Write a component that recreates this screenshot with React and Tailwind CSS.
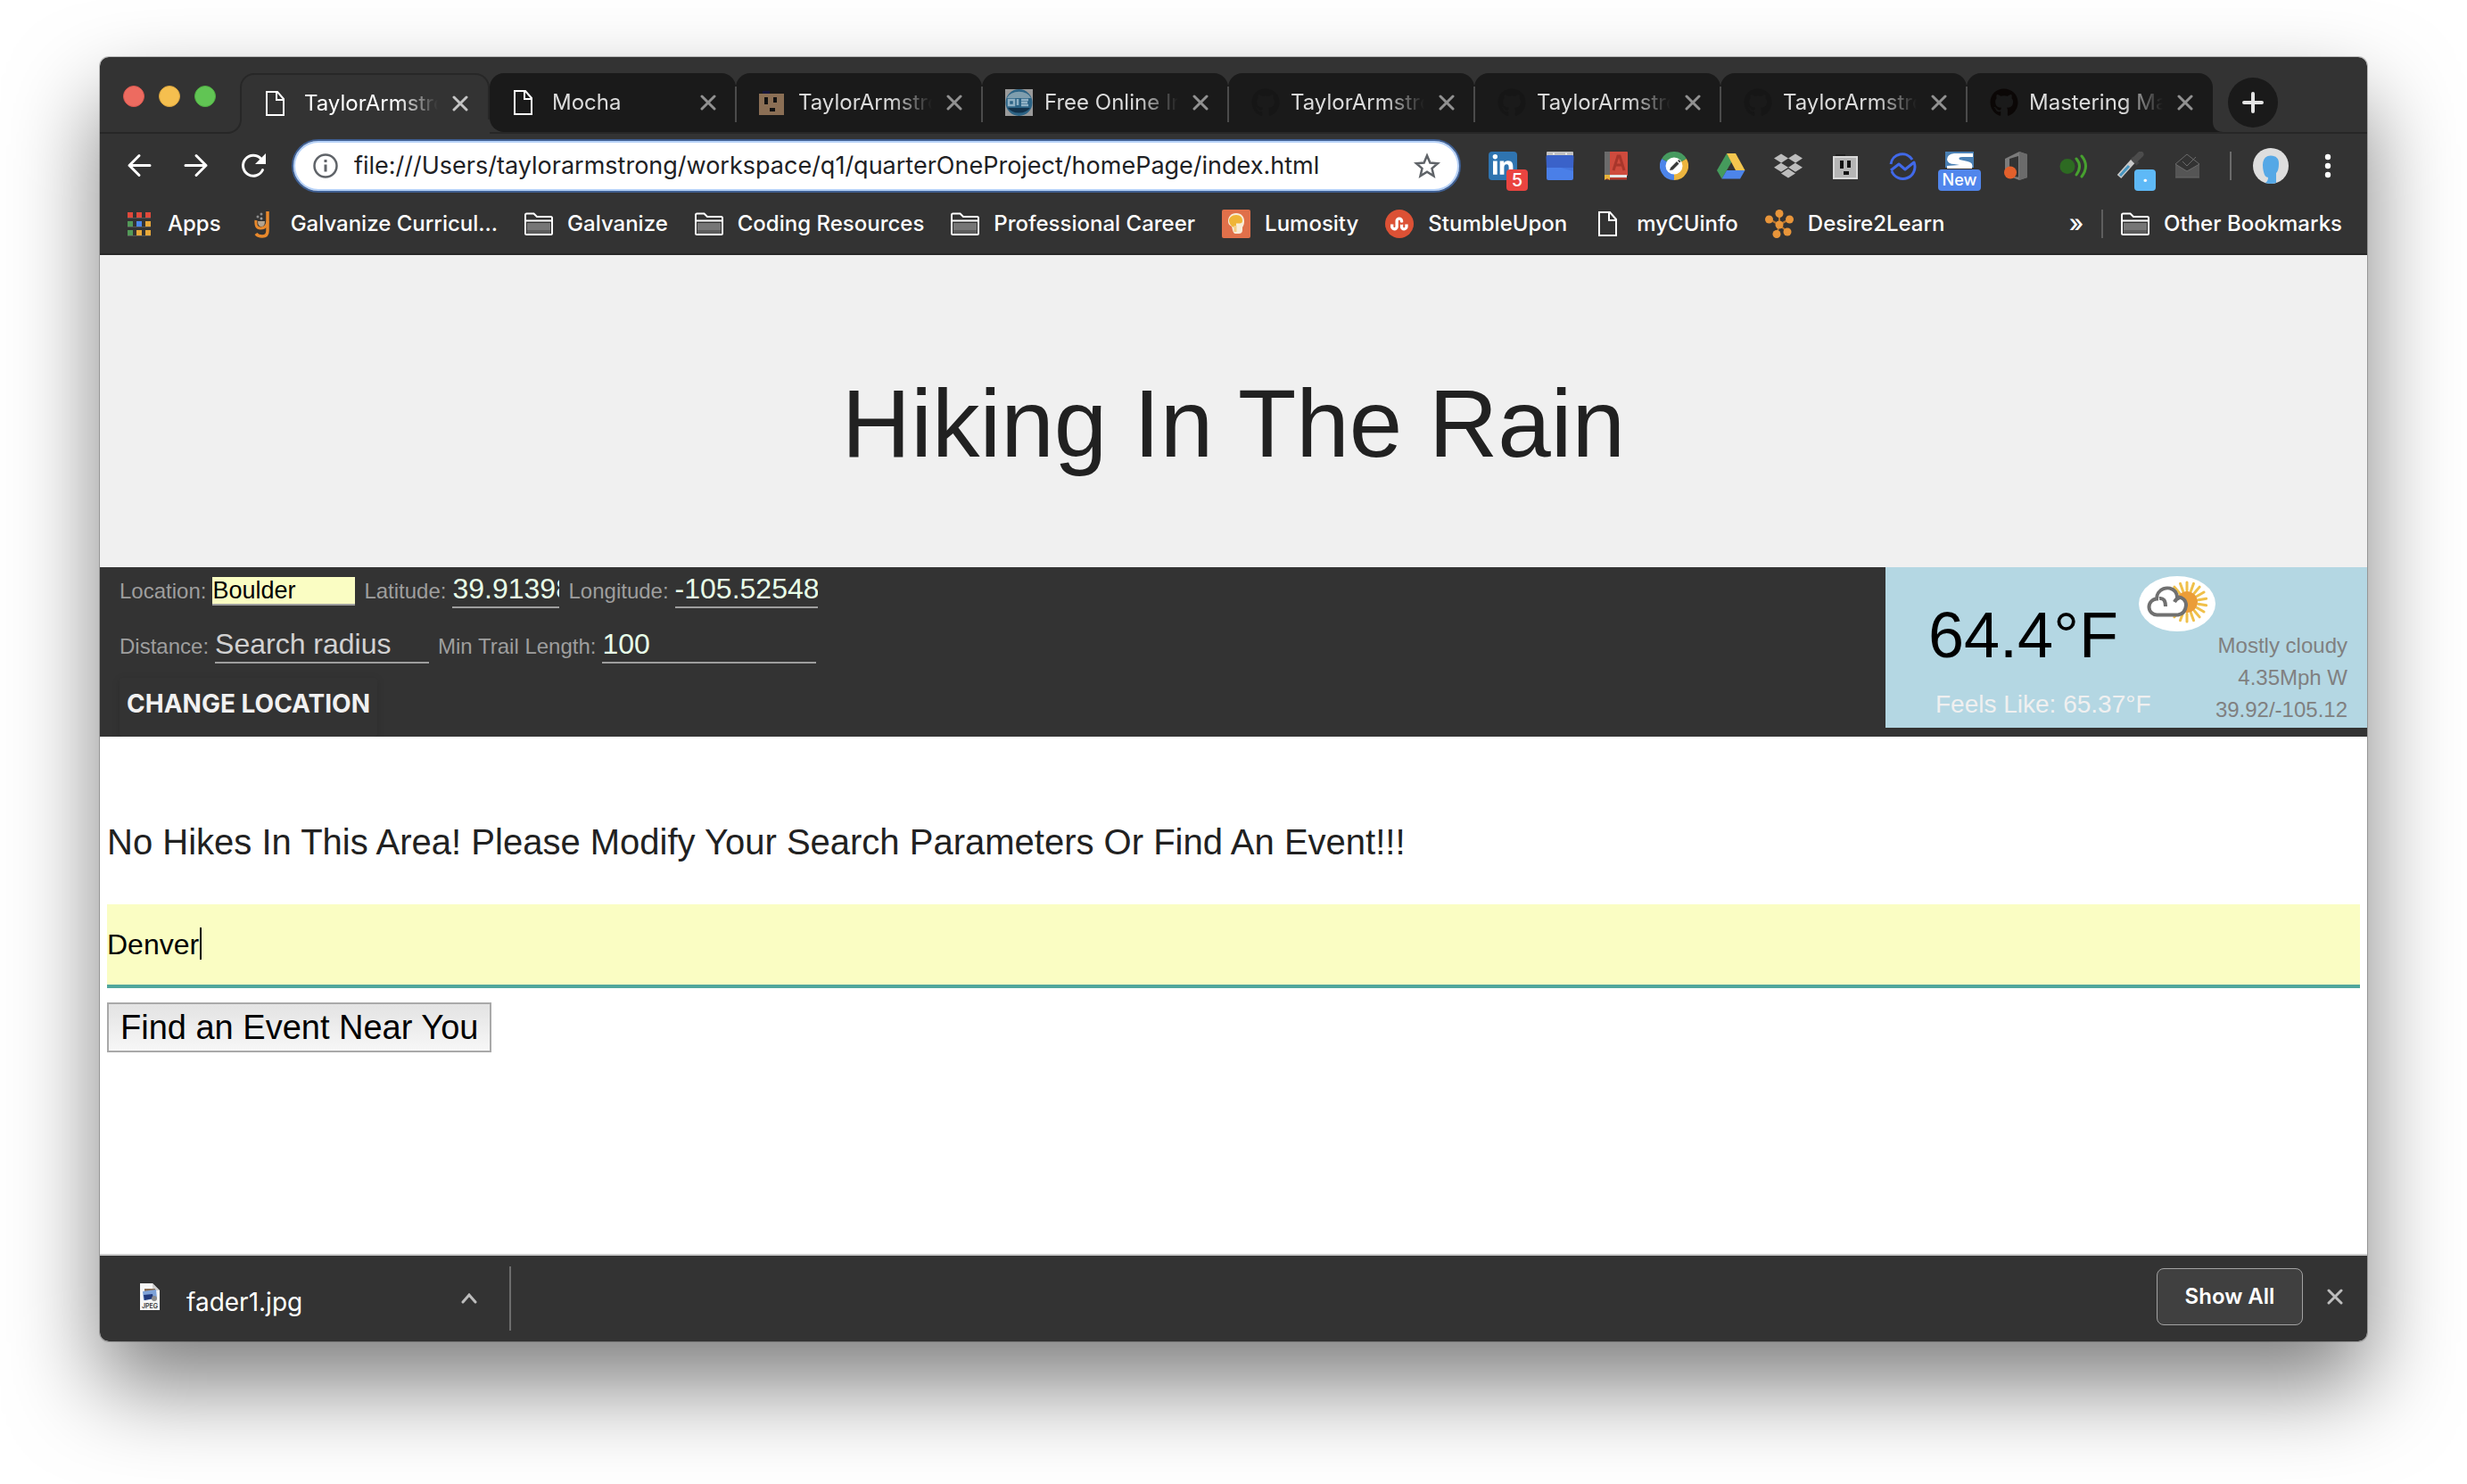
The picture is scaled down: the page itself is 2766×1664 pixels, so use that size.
import { FaDropbox, FaGithub, FaLinkedinIn, FaStumbleupon } from "react-icons/fa";

function PageIcon({ viewBox = "0 0 32 32" }) {
  return (
    <svg viewBox={viewBox} className="size-8" fill="none" stroke="#fff" strokeWidth="2">
      <path d="M6 3h12l7 8v18H6z" />
      <path d="M17 3v9h8" />
    </svg>
  );
}

function FolderIcon() {
  return (
    <svg viewBox="0 0 32 32" className="size-8 shrink-0" fill="none" stroke="#fff" strokeWidth="2">
      <path d="M1 27.5V6q0-1.500 1.500-1.500H10.500L14 8H29.500Q31 8 31 9.500V26.500Q31 28 29.500 28H2.500Q1 28 1 27z" />
      <path d="M2 12.500h28" />
      <path d="M3 15h26v8H3z" fill="#767676" stroke="none" />
      <path d="M3 23h26v4H3z" fill="#5c5c5c" stroke="none" />
    </svg>
  );
}

function CloseIcon({ className }) {
  return (
    <svg viewBox="0 0 18 18" className={className} fill="none" stroke="currentColor" strokeWidth="3" strokeLinecap="round">
      <path d="M2 2l14 14M16 2L2 16" />
    </svg>
  );
}

function BrickIcon() {
  return (
    <svg viewBox="0 0 32 32" className="size-8">
      <path d="M4 3h8v3H4z" fill="#16163a" />
      <path d="M0 6h28v24H0z" fill="#8b6f55" />
      <path d="M6 10h4v8H6zM16 10h4v6h-4zM12 22h6v4h-6z" fill="#111" />
    </svg>
  );
}

function OieIcon() {
  return (
    <svg viewBox="0 0 32 32" className="size-8">
      <path d="M0 1h31v30H0z" fill="#9a9a9a" />
      <ellipse cx="15.500" cy="16" rx="15" ry="15" fill="#2c6385" />
      <path d="M2 11a14 10 0 0 1 27 0z" fill="#7f9eae" />
      <path d="M3 22a14 10 0 0 0 25 0z" fill="#12314a" />
      <path d="M4 13h6v6H4zM14 12v7M18 13h8M18 16h7M18 19h8" fill="none" stroke="#8fb0c4" strokeWidth="2.500" />
    </svg>
  );
}

const TABS = [
  { title: "Mocha", icon: <PageIcon viewBox="4 0 32 32" /> },
  { title: "TaylorArmstrong", icon: <BrickIcon /> },
  { title: "Free Online Image", icon: <OieIcon /> },
  { title: "TaylorArmstrong", icon: <FaGithub className="size-8 text-[#161616]" /> },
  { title: "TaylorArmstrong", icon: <FaGithub className="size-8 text-[#161616]" /> },
  { title: "TaylorArmstrong", icon: <FaGithub className="size-8 text-[#161616]" /> },
  { title: "Mastering Markdown", icon: <FaGithub className="size-8 text-[#0b0706]" /> },
];

function TabBody({ title, icon, active }) {
  return (
    <>
      <span className="size-8 shrink-0">{icon}</span>
      <span
        className={
          "w-[150px] overflow-hidden text-2xl whitespace-nowrap mask-r-from-70% mask-r-to-100% " +
          (active ? "text-white" : "text-[#dcdcdc]")
        }
      >
        {title}
      </span>
      <button aria-label={"Close " + title} className={"ml-auto " + (active ? "text-[#c4c4c4]" : "text-[#919191]")}>
        <CloseIcon className="size-[18px]" />
      </button>
    </>
  );
}

function TabStrip() {
  return (
    <div className="flex h-[86px] items-end">
      <div className="flex h-full w-[157px] shrink-0 items-center gap-4 border-b-2 border-[#272727] pt-1 pl-[26px]">
        <button aria-label="Close window" className="size-6 rounded-full border border-[#d9574f] bg-[#ed6b60]" />
        <button aria-label="Minimize window" className="size-6 rounded-full border border-[#d9a33d] bg-[#f5bf4f]" />
        <button aria-label="Zoom window" className="size-6 rounded-full border border-[#4fae42] bg-[#61c554]" />
      </div>
      <div className="relative flex h-[68px] w-[280px] items-center gap-3 pr-6 pl-7">
        <span className="absolute inset-x-0 top-0 bottom-4 rounded-t-2xl border-2 border-b-0 border-[#272727]" />
        <span className="absolute bottom-0 -left-4 h-4 w-[18px] bg-[#333]">
          <span className="block size-full rounded-br-2xl border-r-2 border-b-2 border-[#272727]" />
        </span>
        <TabBody title="TaylorArmstrong" icon={<PageIcon viewBox="4 0 32 32" />} active />
      </div>
      <div className="flex border-b-2 border-[#272727]">
        {TABS.map((tab, i) => (
          <div
            key={i}
            className={
              "relative flex h-[66px] w-[276px] items-center gap-3 rounded-t-2xl bg-[#1a1a1a] pr-[22px] pl-[26px] " +
              (i === 0 ? "rounded-bl-2xl" : "")
            }
          >
            <TabBody title={tab.title} icon={tab.icon} />
            {i < TABS.length - 1 && <span className="absolute top-[15px] -right-px z-10 h-10 w-[2px] bg-[#4b4b4b]" />}
          </div>
        ))}
      </div>
      <div className="flex h-[68px] flex-1 items-center border-b-2 border-[#272727]">
        <svg viewBox="0 0 12 12" className="size-3 self-end" fill="#1a1a1a">
          <path d="M0 0Q0 12 12 12H0z" />
        </svg>
        <button aria-label="New tab" className="ml-[5px] flex size-14 items-center justify-center rounded-full bg-[#1a1a1a]">
          <svg viewBox="0 0 24 24" className="size-6" fill="none" stroke="#e4e4e4" strokeWidth="4" strokeLinecap="round">
            <path d="M12 2v20M2 12h20" />
          </svg>
        </button>
      </div>
    </div>
  );
}

const EXTENSIONS = [
  {
    name: "LinkedIn",
    icon: (
      <span className="flex size-8 items-center justify-center rounded-sm bg-[#2f74b0]">
        <FaLinkedinIn className="size-[26px] text-white" />
      </span>
    ),
    badge: <span className="absolute top-5 left-5 flex size-6 items-center justify-center rounded bg-[#ea4440] text-xl font-medium text-white">5</span>,
  },
  {
    name: "Calendar",
    icon: (
      <svg viewBox="0 0 32 32" className="size-8">
        <path d="M1 1q0-1 1-1h28q1 0 1 1v5H1z" fill="#c2c2c2" />
        <circle cx="9" cy="2.500" r="1" fill="#fff" />
        <circle cx="23" cy="2.500" r="1" fill="#fff" />
        <path d="M2 4h28q1.500 0 1.500 2L31 18H1L.500 6Q.500 4 2 4z" fill="#3a62c9" />
        <path d="M1 18h30v12q0 2-2 2H3q-2 0-2-2z" fill="#4a7fe8" />
        <path d="M1 28l16-10h14v4L17 18z" fill="#4475dd" />
      </svg>
    ),
  },
  {
    name: "Dictionary",
    icon: (
      <svg viewBox="0 0 32 32" className="size-8">
        <path d="M2 0h7v28H2z" fill="#6b6b6b" />
        <path d="M8 0h19q1 0 1 1v26H8z" fill="#cf4b3d" />
        <path d="M12 21L17 5h2l5 16M14 15h8" fill="none" stroke="#a8362b" strokeWidth="3" />
        <path d="M7 26h20v3H7z" fill="#e6e6e6" />
        <path d="M4 29h23v2.500H4z" fill="#b23c30" />
        <path d="M2 26h6v6l-3-2-3 2z" fill="#e8b33a" />
      </svg>
    ),
  },
  {
    name: "Editor",
    icon: (
      <svg viewBox="0 0 32 32" className="size-8">
        <path d="M16 16L2.140 8A16 16 0 0 1 29.860 8z" fill="#469a5f" />
        <path d="M16 16L29.860 8A16 16 0 0 1 16 32z" fill="#ecb53f" />
        <path d="M16 16V32A16 16 0 0 1 2.140 8z" fill="#4d85ea" />
        <circle cx="16" cy="16" r="9.500" fill="#fff" />
        <path d="M11 21l1-3 7-7 2.500 2.500-7 7zM20 10l1.500-1 2 2-1.500 1.500z" fill="#3a3a3a" />
      </svg>
    ),
  },
  {
    name: "Drive",
    icon: (
      <svg viewBox="0 0 32 32" className="size-8">
        <path d="M11 2L0 21l5.500 9.500L16.500 11.500z" fill="#459b5c" />
        <path d="M11 2h10l10.500 19H21z" fill="#f4c64f" />
        <path d="M11 21h20.500L26 30.500H5.500z" fill="#4d85ea" />
      </svg>
    ),
  },
  { name: "Dropbox", icon: <FaDropbox className="size-8 text-[#bcbcbc]" /> },
  {
    name: "Outlet",
    icon: (
      <svg viewBox="0 0 32 32" className="size-8">
        <path d="M5 3h11v3H5z" fill="#1f1f1f" />
        <path d="M2 5h28v26H2z" fill="#d9d9d9" />
        <path d="M4 7h24v22H4z" fill="#b5b5b5" />
        <path d="M10 10h4v9h-4zM18 10h4v8h-4zM14 22h6v4h-6z" fill="#111" />
      </svg>
    ),
  },
  {
    name: "Messenger",
    icon: (
      <svg viewBox="0 0 32 32" className="size-8" fill="none" stroke="#4169e8" strokeWidth="3">
        <path d="M3 14A13 13 0 0 1 27 9" />
        <path d="M3 21l9-7 7 6 10-8A13 13 0 0 1 4 22" strokeLinejoin="round" />
      </svg>
    ),
  },
  {
    name: "Scribe",
    icon: (
      <svg viewBox="0 0 32 32" className="size-8">
        <path d="M0 0h32v18H0z" fill="#4a80b4" />
        <path d="M31 2H10Q2 3 2 9q1 5 8 5l6 1-14 1v3h28q2-7-5-8l-9-2q-2-3 3-3h12z" fill="#fff" />
      </svg>
    ),
    badge: <span className="absolute top-5 -left-2 flex h-6 w-12 items-center justify-center rounded bg-[#5186ec] text-lg font-medium text-white">New</span>,
  },
  {
    name: "Office",
    icon: (
      <svg viewBox="0 0 32 32" className="size-8">
        <path d="M3 8L19 0l9 3v26l-9 3-10-4 9 .500V5L8 8v11l-5 2z" fill="#7c7c7c" />
        <path d="M19 0l9 3v26l-9 3z" fill="#6b6b6b" />
        <circle cx="9" cy="23.500" r="7" fill="#e2602c" />
      </svg>
    ),
  },
  {
    name: "Beacon",
    icon: (
      <svg viewBox="0 0 32 32" className="size-8">
        <circle cx="9" cy="16.500" r="8.500" fill="#2d6a22" />
        <path d="M19 8q7 8 0 18M25 5q9 11 0 23" fill="none" stroke="#47a02f" strokeWidth="3" strokeLinecap="round" />
      </svg>
    ),
  },
  {
    name: "Color picker",
    icon: (
      <svg viewBox="0 0 32 32" className="size-8">
        <path d="M3 28L20 9" stroke="#c9c9c9" strokeWidth="6" />
        <path d="M4 27L14 16" stroke="#4796c0" strokeWidth="3" />
        <path d="M17 7l7 7" stroke="#444" strokeWidth="4" />
        <path d="M21 9l6-6" stroke="#4c4c4c" strokeWidth="7" strokeLinecap="round" />
      </svg>
    ),
    badge: <span className="absolute top-5 left-5 flex size-6 items-center justify-center rounded bg-[#5eb9f7] text-xl font-bold text-white">·</span>,
  },
  {
    name: "Inbox",
    icon: (
      <svg viewBox="0 0 32 32" className="size-8">
        <path d="M2 14l13 8 14-8v14q0 1-1 1H3q-1 0-1-1z" fill="#555" />
        <path d="M2 14L15 3l14 11-14 8zM10 11l5 5 10-10M2 29h27" fill="none" stroke="#6a6a6a" strokeWidth="1" />
      </svg>
    ),
  },
];

function Toolbar() {
  return (
    <div className="flex h-[72px] items-center pl-7">
      <div className="flex shrink-0 gap-8 pr-[27px]">
        <button aria-label="Back">
          <svg viewBox="0 0 32 32" className="size-8" fill="none" stroke="#fff" strokeWidth="3" strokeLinecap="round" strokeLinejoin="round">
            <path d="M28 15.500H5M16 4.500l-11 11 11 11" />
          </svg>
        </button>
        <button aria-label="Forward">
          <svg viewBox="0 0 32 32" className="size-8" fill="none" stroke="#fff" strokeWidth="3" strokeLinecap="round" strokeLinejoin="round">
            <path d="M4 15.500h23M16 4.500l11 11-11 11" />
          </svg>
        </button>
        <button aria-label="Reload">
          <svg viewBox="0 0 32 32" className="size-8">
            <path d="M26.500 20.500A11.500 11.500 0 1 1 24.500 8" fill="none" stroke="#fff" strokeWidth="3" strokeLinecap="round" />
            <path d="M30 2v12H18z" fill="#fff" />
          </svg>
        </button>
      </div>
      <div className="flex h-[60px] flex-1 items-center rounded-full border-2 border-[#3f5f92] bg-white px-5 ring-2 ring-[#b5d1f8] ring-inset">
        <svg viewBox="0 0 32 32" className="size-8 shrink-0" fill="none" stroke="#5f6368" strokeWidth="2.500">
          <circle cx="16" cy="16" r="12.500" />
          <path d="M16 14.500v8" strokeWidth="3" />
          <path d="M16 9v3" strokeWidth="3" />
        </svg>
        <input
          aria-label="Address"
          defaultValue="file:///Users/taylorarmstrong/workspace/q1/quarterOneProject/homePage/index.html"
          className="ml-4 min-w-0 flex-1 bg-transparent text-[27px] text-[#202124] outline-none"
        />
        <button aria-label="Bookmark this page">
          <svg viewBox="0 0 32 32" className="size-8" fill="none" stroke="#5f6368" strokeWidth="2.500">
            <path d="M16 4.500l3.400 8 8.600.700-6.500 5.700 2 8.400L16 22.800l-7.500 4.500 2-8.400L4 13.200l8.600-.700z" />
          </svg>
        </button>
      </div>
      <div className="flex shrink-0 items-center gap-8 px-[31px]">
        {EXTENSIONS.map((ext) => (
          <button key={ext.name} aria-label={ext.name} className="relative size-8">
            {ext.icon}
            {ext.badge}
          </button>
        ))}
      </div>
      <span className="h-8 w-[2px] bg-[#6b6b6b]" />
      <button aria-label="Profile" className="ml-6">
        <svg viewBox="0 0 40 40" className="size-10">
          <circle cx="20" cy="20" r="20" fill="#dedede" />
          <path d="M20 8.500c6 0 9 3.500 9 8.500 0 6-1 9-3 11v11q-6 2-12 0 3-2 3-6-3-.500-4-3c-1-3-2-6-2-11 0-6 3-10.500 9-10.500z" fill="#55a8e6" />
        </svg>
      </button>
      <button aria-label="Menu" className="mr-7 ml-7">
        <svg viewBox="0 0 32 32" className="size-8" fill="#fff">
          <circle cx="16" cy="6" r="3.200" />
          <circle cx="16" cy="16" r="3.200" />
          <circle cx="16" cy="26" r="3.200" />
        </svg>
      </button>
    </div>
  );
}

function AppsIcon() {
  return (
    <svg viewBox="0 0 32 32" className="size-8">
      <path d="M3 9h26v1H3zM3 19h26v1H3zM3 29h26v1H3z" fill="#555" />
      <path d="M3 3h6v6H3zM13 3h6v6h-6zM23 3h6v6h-6z" fill="#e0493b" />
      <path d="M3 13h6v6H3zM3 23h6v6H3z" fill="#539a58" />
      <path d="M13 13h6v6h-6z" fill="#4a86ee" />
      <path d="M23 13h6v6h-6zM13 23h6v6h-6zM23 23h6v6h-6z" fill="#e8a83a" />
    </svg>
  );
}

const BOOKMARKS = [
  { label: "Apps", icon: <AppsIcon /> },
  {
    label: "Galvanize Curricul...",
    icon: (
      <svg viewBox="0 0 32 32" className="size-8" fill="none">
        <path d="M22 2v22q0 6-6 6-5 0-7-3" stroke="#e8892c" strokeWidth="3.500" />
        <path d="M9 12q-1 9 5 9 7 0 8-8" stroke="#e8892c" strokeWidth="3" />
        <path d="M11 13h8q0 6-4 6t-4-6z" fill="#b5a48e" />
        <circle cx="11" cy="8" r="1.500" fill="#8d8d8d" />
        <circle cx="15" cy="5" r="1.500" fill="#8d8d8d" />
        <circle cx="15" cy="10" r="1.500" fill="#9d9d9d" />
      </svg>
    ),
  },
  { label: "Galvanize", icon: <FolderIcon /> },
  { label: "Coding Resources", icon: <FolderIcon /> },
  { label: "Professional Career", icon: <FolderIcon /> },
  {
    label: "Lumosity",
    icon: (
      <svg viewBox="0 0 32 32" className="size-8">
        <rect width="32" height="32" rx="2" fill="#e0704a" />
        <path d="M16 4c6 0 9 4 9 9 0 4-1 5-2 7v3q0 4-4 4h-4q-2 0-3-4l-1-4c-3-2-4-3-4-6 0-5 3-9 9-9z" fill="#f8ecd8" />
        <path d="M16 6c5 0 7 3 7 6.500q0 3-3 3h-4v4h-4c-2-2-4-4-4-7C8 9 11 6 16 6z" fill="#efb537" />
        <path d="M15 18v7" stroke="#f3cf85" strokeWidth="3" />
      </svg>
    ),
  },
  {
    label: "StumbleUpon",
    icon: (
      <span className="flex size-8 items-center justify-center rounded-full bg-[#dc5135]">
        <FaStumbleupon className="size-5 text-white" />
      </span>
    ),
  },
  { label: "myCUinfo", icon: <PageIcon /> },
  {
    label: "Desire2Learn",
    icon: (
      <svg viewBox="0 0 32 32" className="size-8" fill="#e8953a" stroke="#b9762f" strokeWidth="2">
        <path d="M16 17V5M16 17L5 11M16 17l11-6M16 17l-3 11M16 17l9 8" fill="none" />
        <g stroke="none">
          <circle cx="16" cy="4.500" r="4.500" />
          <circle cx="4.500" cy="11" r="4.500" />
          <circle cx="27.500" cy="11" r="4.500" />
          <circle cx="16" cy="17" r="4.500" />
          <circle cx="13" cy="27.500" r="4.500" />
          <circle cx="25" cy="25" r="4.500" />
        </g>
      </svg>
    ),
  },
];

function BookmarkBar() {
  return (
    <nav className="flex h-16 items-center border-b-2 border-[#272727] pr-7 pb-1 pl-7 text-2xl font-medium whitespace-nowrap text-white">
      <div className="flex items-center gap-[30px]">
        {BOOKMARKS.map((b) => (
          <a key={b.label} href="#" className="flex items-center gap-4">
            <span className="size-8 shrink-0">{b.icon}</span>
            {b.label}
          </a>
        ))}
      </div>
      <button aria-label="More bookmarks" className="ml-auto text-[27px] leading-8">
        »
      </button>
      <span className="mr-5 ml-5 h-8 w-[2px] bg-[#5e5e5e]" />
      <a href="#" className="flex items-center gap-4">
        <FolderIcon />
        Other Bookmarks
      </a>
    </nav>
  );
}

function Field({ id, label, children }) {
  return (
    <div className="flex items-baseline gap-[7px]">
      <label htmlFor={id} className="text-2xl leading-9 text-[#9e9e9e]">
        {label}
      </label>
      {children}
    </div>
  );
}

const FIELD = "h-[42px] border-b-2 border-[#9e9e9e] bg-transparent text-[32px] text-[#e8ffe8] outline-none placeholder:text-[#d1d1d1]";

const RAYS = Array.from({ length: 18 }, (_, i) => i * 20);

function SearchBand() {
  return (
    <section className="flex items-start justify-between overflow-hidden bg-[#333] font-['Liberation_Sans',sans-serif]">
      <form className="flex flex-col items-start gap-5 pt-1 pl-[22px]" onSubmit={(e) => e.preventDefault()}>
        <div className="flex h-[42px] items-baseline gap-[10px]">
          <Field id="location" label="Location:">
            <input
              id="location"
              defaultValue="Boulder"
              className="h-8 w-40 border-b-2 border-[#9e9e9e] bg-[#fafdc3] text-[27px] leading-8 text-black outline-none"
            />
          </Field>
          <Field id="latitude" label="Latitude:">
            <input id="latitude" defaultValue="39.91398" className={FIELD + " w-[120px]"} />
          </Field>
          <Field id="longitude" label="Longitude:">
            <input id="longitude" defaultValue="-105.52548" className={FIELD + " w-40"} />
          </Field>
        </div>
        <div className="flex h-[42px] items-baseline gap-[10px]">
          <Field id="distance" label="Distance:">
            <input id="distance" placeholder="Search radius" className={FIELD + " w-60"} />
          </Field>
          <Field id="length" label="Min Trail Length:">
            <input id="length" defaultValue="100" className={FIELD + " w-60"} />
          </Field>
        </div>
        <button className="-mt-1 h-[66px] rounded px-2 pb-2 font-['Inter',sans-serif] text-[28px] font-bold text-[#f1f1f1] shadow-[0_2px_8px_rgba(0,0,0,0.15)]">
          CHANGE LOCATION
        </button>
      </form>
      <div className="flex h-[180px] w-[540px] bg-[#b4d7e3]">
        <div className="w-[374px]">
          <div className="flex h-[114px] items-start justify-between pl-12">
            <span className="pt-10 text-[72px] leading-[72px] text-black">64.4°F</span>
            <span className="mt-[10px] flex h-[62px] w-[86px] items-center justify-center rounded-[43px/31px] bg-white">
              <svg viewBox="0 0 72 52" className="h-[52px] w-[72px]">
                <g stroke="#f0c04a" strokeWidth="3" strokeLinecap="round">
                  {RAYS.map((a) => (
                    <path key={a} d="M47 10V1" transform={"rotate(" + a + " 47 24) translate(0 1)"} />
                  ))}
                </g>
                <circle cx="47" cy="24" r="12" fill="#eb9d38" />
                <path
                  d="M14 38.500a9 9 0 0 1-1-18 12 12 0 0 1 21-8q2 3 2 6a9 9 0 0 1 10 9.500q-1 9-9 10.500z"
                  fill="#fff"
                  stroke="#707070"
                  strokeWidth="4"
                />
                <path d="M16 20q7-1 7 9M33 24q2-4 6-5" fill="none" stroke="#707070" strokeWidth="4" />
              </svg>
            </span>
          </div>
          <p className="pt-[22px] pl-14 text-[28px] leading-9 text-[#f0f0f0]">Feels Like: 65.37°F</p>
        </div>
        <div className="flex flex-1 flex-col justify-end pr-[22px] pb-[2px] text-right text-2xl leading-9 whitespace-nowrap text-[#808080]">
          <p>Mostly cloudy</p>
          <p>4.35Mph W</p>
          <p>39.92/-105.12</p>
        </div>
      </div>
    </section>
  );
}

function DownloadBar() {
  return (
    <footer className="flex h-[98px] items-center border-t-2 border-[#ccc] bg-[#333] pr-[27px] pl-[45px]">
      <svg viewBox="0 0 22 30" className="mb-1 h-[30px] w-[22px]">
        <path d="M0 0h14l8 8v22H0z" fill="#f6f6f6" />
        <path d="M14 0l8 8h-8z" fill="#cfcfcf" />
        <path d="M5 6h12v3H5z" fill="#8b6f55" />
        <path d="M3 9l15-2 1 10-15 2z" fill="#7ea2d8" />
        <path d="M4 13l10-1 1 5-10 2z" fill="#223a7c" />
        <circle cx="16" cy="17" r="3" fill="#8c8c8c" />
        <text x="11" y="28" textAnchor="middle" fontSize="7" fontWeight="600" fill="#333">JPEG</text>
      </svg>
      <span className="mt-2 ml-[30px] w-[308px] text-[28px] text-white">fader1.jpg</span>
      <button aria-label="Download options" className="w-[18px]">
        <svg viewBox="0 0 18 12" className="h-3 w-[18px]" fill="none" stroke="#bdbdbd" strokeWidth="3" strokeLinecap="round">
          <path d="M2 10l7-8 7 8" />
        </svg>
      </button>
      <span className="ml-9 h-[72px] w-[2px] bg-[#6d6d6d]" />
      <button className="mb-1 ml-auto h-16 w-[164px] rounded-lg border border-[#a3a3a3] bg-[#404040] text-2xl font-semibold text-white">
        Show All
      </button>
      <button aria-label="Close downloads bar" className="mb-1 ml-[27px] text-[#bdbdbd]">
        <CloseIcon className="size-[18px]" />
      </button>
    </footer>
  );
}

export default function App() {
  return (
    <div className="flex min-h-screen bg-white px-28 pt-16 pb-40 font-['Inter',sans-serif]">
      <div className="flex min-w-0 flex-1 rounded-[10px] shadow-[0_0_0_1px_rgba(0,0,0,0.22),0_50px_100px_rgba(0,0,0,0.5)]">
        <div className="flex min-w-0 flex-1 flex-col overflow-hidden rounded-[10px] bg-white">
          <div className="bg-[#333]">
            <TabStrip />
            <Toolbar />
            <BookmarkBar />
          </div>
          <header className="flex h-[350px] items-center justify-center bg-[#f0f0f0] pt-7">
            <h1 className="font-['Liberation_Sans',sans-serif] text-[107px] text-[#212121]">Hiking In The Rain</h1>
          </header>
          <SearchBand />
          <main className="flex flex-1 flex-col items-start px-2 pt-[94px] font-['Liberation_Sans',sans-serif]">
            <p className="text-[40px] leading-[48px] text-[#212121]">
              No Hikes In This Area! Please Modify Your Search Parameters Or Find An Event!!!
            </p>
            <div className="relative mt-[46px] w-full">
              <input
                aria-label="Event location"
                defaultValue="Denver"
                className="block h-[94px] w-full border-b-4 border-[#50a69c] bg-[#fafdc3] text-[32px] text-black outline-none"
              />
              <span className="absolute top-[26px] left-[104px] h-9 w-[2px] bg-black" />
            </div>
            <button className="mt-4 h-14 border-2 border-[#a9a9a9] bg-linear-to-b from-[#e3e3e3] to-[#f7f7f7] px-[13px] text-[38px] leading-[50px] text-black">
              Find an Event Near You
            </button>
          </main>
          <DownloadBar />
        </div>
      </div>
    </div>
  );
}
